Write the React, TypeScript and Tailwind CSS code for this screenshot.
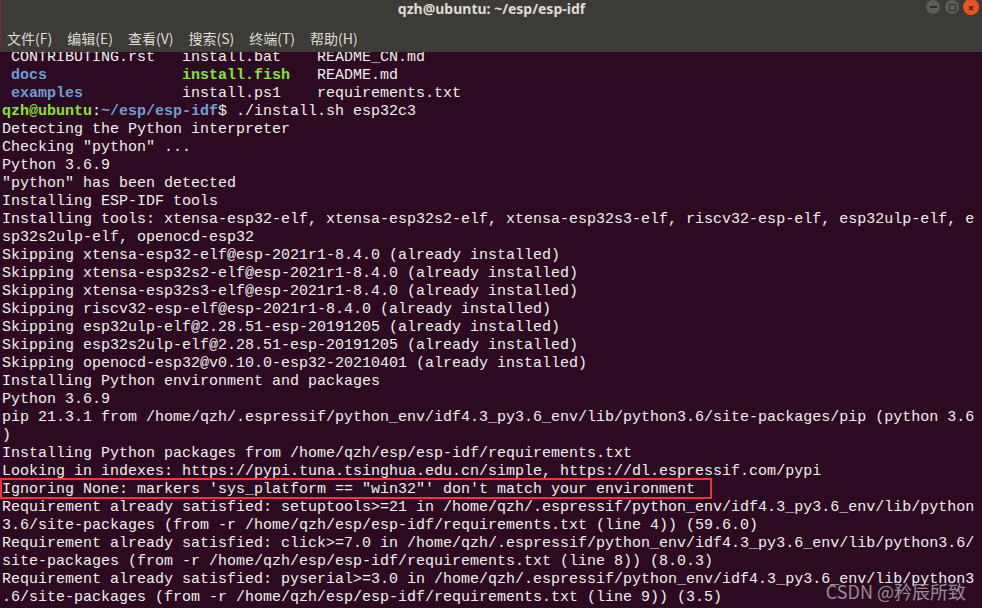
import React from 'react';

const mono = { fontFamily: '"Liberation Mono", "DejaVu Sans Mono", monospace' };

const lines: string[] = [
  'Detecting the Python interpreter',
  'Checking "python" ...',
  'Python 3.6.9',
  '"python" has been detected',
  'Installing ESP-IDF tools',
  'Installing tools: xtensa-esp32-elf, xtensa-esp32s2-elf, xtensa-esp32s3-elf, riscv32-esp-elf, esp32ulp-elf, e',
  'sp32s2ulp-elf, openocd-esp32',
  'Skipping xtensa-esp32-elf@esp-2021r1-8.4.0 (already installed)',
  'Skipping xtensa-esp32s2-elf@esp-2021r1-8.4.0 (already installed)',
  'Skipping xtensa-esp32s3-elf@esp-2021r1-8.4.0 (already installed)',
  'Skipping riscv32-esp-elf@esp-2021r1-8.4.0 (already installed)',
  'Skipping esp32ulp-elf@2.28.51-esp-20191205 (already installed)',
  'Skipping esp32s2ulp-elf@2.28.51-esp-20191205 (already installed)',
  'Skipping openocd-esp32@v0.10.0-esp32-20210401 (already installed)',
  'Installing Python environment and packages',
  'Python 3.6.9',
  'pip 21.3.1 from /home/qzh/.espressif/python_env/idf4.3_py3.6_env/lib/python3.6/site-packages/pip (python 3.6',
  ')',
  'Installing Python packages from /home/qzh/esp/esp-idf/requirements.txt',
  'Looking in indexes: https://pypi.tuna.tsinghua.edu.cn/simple, https://dl.espressif.com/pypi',
];

const after: string[] = [
  'Requirement already satisfied: setuptools>=21 in /home/qzh/.espressif/python_env/idf4.3_py3.6_env/lib/python',
  '3.6/site-packages (from -r /home/qzh/esp/esp-idf/requirements.txt (line 4)) (59.6.0)',
  'Requirement already satisfied: click>=7.0 in /home/qzh/.espressif/python_env/idf4.3_py3.6_env/lib/python3.6/',
  'site-packages (from -r /home/qzh/esp/esp-idf/requirements.txt (line 8)) (8.0.3)',
  'Requirement already satisfied: pyserial>=3.0 in /home/qzh/.espressif/python_env/idf4.3_py3.6_env/lib/python3',
  '.6/site-packages (from -r /home/qzh/esp/esp-idf/requirements.txt (line 9)) (3.5)',
];

const menus = ['文件(F)', '编辑(E)', '查看(V)', '搜索(S)', '终端(T)', '帮助(H)'];

const Line: React.FC<{ children: React.ReactNode }> = ({ children }) => (
  <div className="h-[18px] leading-[18px] whitespace-pre">{children}</div>
);

export default function App() {
  return (
    <div className="w-[982px] h-[608px] overflow-hidden flex flex-col bg-[#2c0a21] relative">
      <header className="bg-[#3c3b37] border-l border-[#7d2637] shrink-0">
        <div className="h-[24px] relative flex items-start justify-center">
          <span
            className="text-[14px] font-bold text-[#dfdbd2] leading-[18px]"
            style={{ fontFamily: '"Noto Sans", "Open Sans", sans-serif' }}
          >
            qzh@ubuntu: ~/esp/esp-idf
          </span>
          <div className="absolute right-[3px] top-[-1px] flex gap-[3px]">
            <div className="w-[16px] h-[16px] rounded-full bg-[#5d5c57] border border-[#3a3935] flex items-center justify-center">
              <div className="w-[7px] h-[2px] bg-[#2e2d2a]" />
            </div>
            <div className="w-[16px] h-[16px] rounded-full bg-[#5d5c57] border border-[#3a3935] flex items-center justify-center">
              <div className="w-[7px] h-[7px] border border-[#2e2d2a]" />
            </div>
            <div className="w-[16px] h-[16px] rounded-full bg-[#e9541f] flex items-center justify-center text-[11px] leading-none text-[#3a1a0c] font-bold">
              ×
            </div>
          </div>
        </div>
        <nav
          className="h-[28px] flex items-center gap-[15px] pl-[6px] text-[14px] text-[#dfdbd2]"
          style={{ fontFamily: '"Noto Sans CJK SC", "Noto Sans", sans-serif' }}
        >
          {menus.map((m) => (
            <span key={m} className="leading-none">{m}</span>
          ))}
        </nav>
      </header>

      <main className="flex-1 overflow-hidden pl-[2px] text-[15px] text-[#f0f0ee]" style={mono}>
        <div className="-mt-[3px]">
          <Line>{' CONTRIBUTING.rst   install.bat    README_CN.md'}</Line>
          <Line>
            {' '}<span className="font-bold text-[#6f9dd4]">docs</span>
            {'               '}<span className="font-bold text-[#8ae234]">install.fish</span>
            {'   README.md'}
          </Line>
          <Line>
            {' '}<span className="font-bold text-[#6f9dd4]">examples</span>
            {'           install.ps1    requirements.txt'}
          </Line>
          <Line>
            <span className="font-bold text-[#8ae234]">qzh@ubuntu</span>:
            <span className="font-bold text-[#729fcf]">~/esp/esp-idf</span>$ ./install.sh esp32c3
          </Line>
          {lines.map((l, i) => (
            <Line key={i}>{l}</Line>
          ))}
          <div className="relative">
            <Line>{'Ignoring None: markers \'sys_platform == "win32"\' don\'t match your environment'}</Line>
            <div className="absolute left-[-2px] top-[-3px] w-[712px] h-[21px] border-2 border-[#e8363a]" />
          </div>
          {after.map((l, i) => (
            <Line key={i}>{l}</Line>
          ))}
        </div>
      </main>

      <div
        className="absolute right-[16px] bottom-[8px] text-[18px] text-[#a59ca1] opacity-90 leading-none"
        style={{ fontFamily: '"Noto Sans CJK SC", "Noto Sans", sans-serif' }}
      >
        CSDN @矜辰所致
      </div>
    </div>
  );
}
